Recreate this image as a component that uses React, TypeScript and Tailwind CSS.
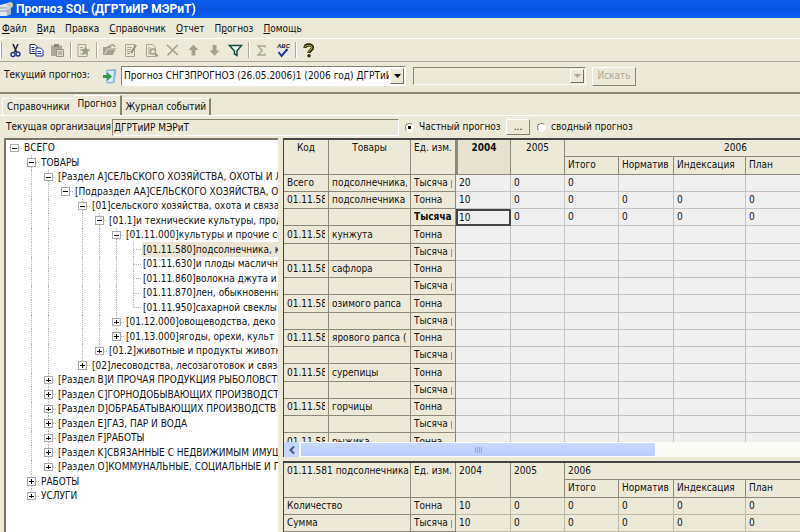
import type { ReactNode } from 'react';

type Node = { label: string; plus?: boolean; selected?: boolean; children?: Node[] };
type Row = { node: Node; guides: boolean[]; last: boolean };

const tree: Node = {
  label: 'ВСЕГО',
  children: [
    {
      label: 'ТОВАРЫ',
      children: [
        {
          label: '[Раздел A]СЕЛЬСКОГО ХОЗЯЙСТВА, ОХОТЫ И Л',
          children: [
            {
              label: '[Подраздел AA]СЕЛЬСКОГО ХОЗЯЙСТВА, ОХ',
              children: [
                {
                  label: '[01]сельского хозяйства, охота и связа',
                  children: [
                    {
                      label: '[01.1]и технические культуры, прод',
                      children: [
                        {
                          label: '[01.11.000]культуры и прочие се',
                          children: [
                            { label: '[01.11.580]подсолнечника, к', selected: true },
                            { label: '[01.11.630]и плоды масличны' },
                            { label: '[01.11.860]волокна джута и' },
                            { label: '[01.11.870]лен, обыкновенна' },
                            { label: '[01.11.950]сахарной свеклы' },
                          ],
                        },
                        { label: '[01.12.000]овощеводства, деко', plus: true },
                        { label: '[01.13.000]ягоды, орехи, культ', plus: true },
                      ],
                    },
                    { label: '[01.2]животные и продукты животн', plus: true },
                  ],
                },
                { label: '[02]лесоводства, лесозаготовок и связа', plus: true },
              ],
            },
          ],
        },
        { label: '[Раздел B]И ПРОЧАЯ ПРОДУКЦИЯ РЫБОЛОВСТВ', plus: true },
        { label: '[Раздел C]ГОРНОДОБЫВАЮЩИХ ПРОИЗВОДСТВ', plus: true },
        { label: '[Раздел D]ОБРАБАТЫВАЮЩИХ ПРОИЗВОДСТВ', plus: true },
        { label: '[Раздел E]ГАЗ, ПАР И ВОДА', plus: true },
        { label: '[Раздел F]РАБОТЫ', plus: true },
        { label: '[Раздел K]СВЯЗАННЫЕ С НЕДВИЖИМЫМ ИМУЩЕ', plus: true },
        { label: '[Раздел O]КОММУНАЛЬНЫЕ, СОЦИАЛЬНЫЕ И ПЕ', plus: true },
      ],
    },
    { label: 'РАБОТЫ', plus: true },
    { label: 'УСЛУГИ', plus: true },
  ],
};

function flatten(node: Node, guides: boolean[], last: boolean): Row[] {
  const kids = node.children ?? [];
  return [
    { node, guides, last },
    ...kids.flatMap((k, i) => flatten(k, [...guides, !last], i === kids.length - 1)),
  ];
}

const treeRows = flatten(tree, [], true);

function TreeRow({ node, guides, last }: Row) {
  const hasBox = node.plus || node.children;
  return (
    <li className="flex h-[14px] items-stretch whitespace-nowrap even:h-[15px]">
      {guides.map((on, i) => (
        <span key={i} className="flex w-[17px] shrink-0 justify-center">
          {on && <span className="w-px border-l border-dotted border-[#b5b5b5]" />}
        </span>
      ))}
      <svg className="h-full w-[17px] shrink-0" viewBox="0 0 17 15" fill="none" shapeRendering="crispEdges">
        {guides.length > 0 && (
          <path d={last ? 'M8.5 0V7' : 'M8.5 0V15'} stroke="#b5b5b5" strokeDasharray="1 1" />
        )}
        <path d="M9 7.5H17" stroke="#b5b5b5" strokeDasharray="1 1" />
        {hasBox && (
          <>
            <rect x="4.5" y="3.5" width="8" height="8" fill="#fff" stroke="#a5a5a5" />
            <path d={node.plus ? 'M6 7.5h5M8.5 5v5' : 'M6 7.5h5'} stroke="#000" />
          </>
        )}
      </svg>
      <span className={node.selected ? 'flex items-center bg-[#ece5d5] px-px' : 'flex items-center px-px'}>
        {node.label}
      </span>
    </li>
  );
}

const menus = [
  ['', 'Ф', 'айл'],
  ['', 'В', 'ид'],
  ['Правка', '', ''],
  ['', 'С', 'правочник'],
  ['', 'О', 'тчет'],
  ['П', 'р', 'огноз'],
  ['', 'П', 'омощь'],
];

function Tool({ label, children }: { label: string; children: ReactNode }) {
  return (
    <button aria-label={label} className="flex w-[21px] justify-center">
      <svg width="15" height="15" viewBox="0 0 15 15" fill="none">
        {children}
      </svg>
    </button>
  );
}

function Sep() {
  return <span className="mr-px ml-[2px] h-[16px] w-[2px] border-l border-[#aca899] bg-white" />;
}

function Toolbar() {
  return (
    <div className="flex h-[23px] shrink-0 items-center border-t border-white">
      <span className="mr-[3px] h-[16px] w-[2px] border-r border-[#aca899] bg-white" />
      <Tool label="Вырезать">
        <path d="M5 1l3.5 8M10 1L6.5 9" stroke="#20203c" strokeWidth="1.5" />
        <circle cx="5" cy="11.5" r="2" stroke="#23358c" strokeWidth="1.4" />
        <circle cx="10" cy="11" r="2" stroke="#23358c" strokeWidth="1.4" />
      </Tool>
      <Tool label="Копировать">
        <path d="M1 1.5h5l2 2v7H1z" fill="#fff" stroke="#1c2450" />
        <path d="M2.5 4.5h3M2.5 6.5h3M2.5 8.5h3" stroke="#1c2450" />
        <path d="M7 5h4.5l2.5 2.5V13H7z" fill="#fff" stroke="#1d3399" />
        <path d="M8.5 8.5h3.5M8.5 10.5h4" stroke="#1d3399" />
      </Tool>
      <Tool label="Вставить">
        <path d="M1 2.5h11V13H1z" fill="#aca899" />
        <path d="M4 1h5v3H4z" fill="#8c8878" />
        <path d="M6.5 6.5h7v7h-7z" fill="#dedac8" stroke="#999584" />
        <path d="M8 9h4M8 11h4" stroke="#999584" />
      </Tool>
      <Sep />
      <Tool label="Создать">
        <path d="M2 1.5h8v2M2 1.5V13.5h9V11" stroke="#a9a595" />
        <path d="M4 4.5h3M4 7h2M4 11h5" stroke="#a9a595" />
        <path d="M9.5 2.5l1.5 3.5 3.500.7-2.800 2 .3 3.800-3-2-3 1.500 1-3.500L4.500 6.500l3.500-.5z" fill="#a09c8c" />
      </Tool>
      <Sep />
      <Tool label="Открыть">
        <path d="M1 4h4l1-1.5h3V5h5l-3 7H1z" fill="#a5a191" />
        <path d="M8 4c1-3 4-3 5 0" stroke="#a5a191" strokeWidth="1.5" />
        <path d="M3 11l2-5h8" stroke="#dedac8" />
      </Tool>
      <Tool label="Изменить">
        <path d="M2.5 1.5h9v12h-9z" stroke="#a9a595" />
        <path d="M4 4.5h5M4 6.5h4M4 8.5h3M4 10.5h3" stroke="#a9a595" />
        <path d="M13 2L8 10" stroke="#96927f" strokeWidth="2" />
      </Tool>
      <Tool label="Просмотр">
        <path d="M2.5 1.5h6l3 3v9h-9z" stroke="#a9a595" />
        <path d="M4 5h3M4 7h2M4 9h2M4 11h3" stroke="#a9a595" />
        <circle cx="9" cy="8.5" r="2.5" stroke="#a09c8c" strokeWidth="1.3" />
        <path d="M11 10.5l3 3" stroke="#a09c8c" strokeWidth="1.8" />
      </Tool>
      <Tool label="Удалить">
        <path d="M2 2l11 10M12.5 2L2.5 12.5" stroke="#a19d8d" strokeWidth="1.5" />
      </Tool>
      <Tool label="Вверх">
        <path d="M7.5 1.5L12.500 7H9.500v5.500h-4V7h-3z" fill="#a5a191" />
      </Tool>
      <Tool label="Вниз">
        <path d="M7.5 13L2.500 7.500h3V2h4v5.500h3z" fill="#a5a191" />
      </Tool>
      <Tool label="Фильтр">
        <path d="M1.5 2.5h12L9 8v4.500L6.500 11V8z" fill="#e9f6ee" stroke="#154a42" strokeWidth="1.5" />
      </Tool>
      <Sep />
      <Tool label="Сумма">
        <path d="M11 4.5V3H4l4 4.500L4 12h7v-1.500" stroke="#a9a595" strokeWidth="1.3" />
      </Tool>
      <Tool label="Орфография">
        <text x="2" y="5" fontSize="6" fontWeight="bold" fontStyle="italic" fill="#222" fontFamily="Liberation Sans">ABC</text>
        <path d="M3.5 9l3 4 6-7" stroke="#23359c" strokeWidth="2" />
      </Tool>
      <Sep />
      <Tool label="Справка">
        <path d="M4 5c0-4 7.500-4 7.500-.5C11.500 7 8 7 8 10" stroke="#1c1c08" strokeWidth="3.2" />
        <path d="M4 4.500c0-3 7-3 7 0C11 7 7.700 6.500 7.700 9.500" stroke="#a8a02c" strokeWidth="1.2" />
        <circle cx="8" cy="12.8" r="1.7" fill="#2b2a0c" />
      </Tool>
    </div>
  );
}

function DropArrow({ dim }: { dim?: boolean }) {
  return (
    <span className="pointer-events-none absolute inset-y-[2px] right-[2px] flex w-[14px] items-center justify-center border border-t-white border-r-[#716f64] border-b-[#716f64] border-l-white bg-[#ece9d8]">
      <svg width="7" height="4" viewBox="0 0 7 4">
        <path d="M0 0h7L3.5 4z" fill={dim ? '#aca899' : '#000'} />
      </svg>
    </span>
  );
}

const sunken = 'border border-t-[#86836f] border-l-[#86836f] border-r-white border-b-white';

const goods: [string, string, string, string[]][] = [
  ['Всего', 'подсолнечника,', 'Тысяча р', ['20', '0', '0', '', '', '']],
  ['01.11.58', 'подсолнечника', 'Тонна', ['10', '0', '0', '0', '0', '0']],
  ['', '', 'Тысяча', ['10', '0', '0', '0', '0', '0']],
  ...['кунжута', 'сафлора', 'озимого рапса', 'ярового рапса (к', 'сурепицы', 'горчицы', 'рыжика'].flatMap(
    (name): [string, string, string, string[]][] => [
      ['01.11.58', name, 'Тонна', ['', '', '', '', '', '']],
      ['', '', 'Тысяча р', ['', '', '', '', '', '']],
    ],
  ),
];

const head = 'border-r border-b border-[#8d8a7c] bg-[#ece9d8] px-[3px] pt-px pb-0 align-top font-normal whitespace-nowrap';
const fixed = 'border-r border-b border-[#8d8a7c] bg-[#ece9d8] px-[3px] py-0';
const value = 'border-r border-b border-[#c3c3c3] bg-[#efefef] px-[3px] py-0';

function Clip({ children }: { children: ReactNode }) {
  return <div className="overflow-hidden whitespace-nowrap">{children}</div>;
}

function Cols() {
  return (
    <colgroup>
      <col className="w-[45px]" />
      <col className="w-[82px]" />
      <col className="w-[45px]" />
      <col className="w-[55px]" />
      <col className="w-[54px]" />
      <col className="w-[54px]" />
      <col className="w-[55px]" />
      <col className="w-[72px]" />
      <col />
    </colgroup>
  );
}

const tableClass = 'w-full min-w-[623px] table-fixed border-separate border-spacing-0 leading-[14px]';

function MainTable() {
  return (
    <table className={tableClass}>
      <Cols />
      <thead>
        <tr className="h-[17px]">
          <th rowSpan={2} className={head}>Код</th>
          <th rowSpan={2} className={head}>Товары</th>
          <th rowSpan={2} className={head}>Ед. изм.</th>
          <th rowSpan={2} className="border-r border-b border-l-2 border-[#8d8a7c] bg-[#e6e2cf] pt-px pb-0 align-top font-bold">2004</th>
          <th rowSpan={2} className={head}>2005</th>
          <th colSpan={4} className={head}>2006</th>
        </tr>
        <tr className="h-[18px] text-left">
          <th className={head}>Итого</th>
          <th className={head}>Норматив</th>
          <th className={head}>Индексация</th>
          <th className={head}>План</th>
        </tr>
      </thead>
      <tbody>
        {goods.map(([code, name, unit, values], r) => (
          <tr key={r} className="h-[17px] nth-[4n]:h-[18px]">
            <td className={fixed}><Clip>{code}</Clip></td>
            <td className={fixed}><Clip>{name}</Clip></td>
            <td className={fixed}><Clip>{r === 2 ? <b>{unit}</b> : unit}</Clip></td>
            {values.map((v, c) => (
              <td
                key={c}
                className={r === 2 && c === 0 ? 'border-2 border-[#444] bg-[#efefef] px-px py-0 leading-[13px]' : value}
              >
                {v}
              </td>
            ))}
          </tr>
        ))}
      </tbody>
    </table>
  );
}

function TotalsTable() {
  const beige = 'border-r border-b border-[#bab7a7] bg-[#ece9d8] px-[3px] py-0';
  return (
    <table className={tableClass}>
      <Cols />
      <thead className="text-left">
        <tr className="h-[17px]">
          <th rowSpan={2} colSpan={2} className={head}>01.11.581 подсолнечника</th>
          <th rowSpan={2} className={head}>Ед. изм.</th>
          <th rowSpan={2} className={head}>2004</th>
          <th rowSpan={2} className={head}>2005</th>
          <th colSpan={4} className={head}>2006</th>
        </tr>
        <tr className="h-[18px]">
          <th className={head}>Итого</th>
          <th className={head}>Норматив</th>
          <th className={head}>Индексация</th>
          <th className={head}>План</th>
        </tr>
      </thead>
      <tbody>
        {[
          ['Количество', 'Тонна'],
          ['Сумма', 'Тысяча р'],
        ].map(([name, unit]) => (
          <tr key={name} className="h-[17px]">
            <td colSpan={2} className={fixed}><Clip>{name}</Clip></td>
            <td className={fixed}><Clip>{unit}</Clip></td>
            {['10', '0', '0', '0', '0', '0'].map((v, c) => (
              <td key={c} className={beige}>{v}</td>
            ))}
          </tr>
        ))}
      </tbody>
    </table>
  );
}

export default function App() {
  return (
    <div className="flex h-screen flex-col overflow-hidden bg-[#ece9d8] font-['DejaVu_Sans_Condensed','DejaVu_Sans',sans-serif] text-[10px] leading-[14px] text-[#111]">
      <header className="flex h-[18px] shrink-0 items-center gap-[2px] bg-linear-to-b from-[#0a5cf0] via-[#0553e2] to-[#0a5cf5] text-[12px] font-bold text-white [font-family:Roboto,sans-serif]">
        <svg width="14" height="16" viewBox="0 0 14 16">
          <path d="M0 4l8-2 3 2v9l-5 2H0z" fill="#dfe6ee" />
          <path d="M0 7h7M0 10h7" stroke="#8797ab" />
          <circle cx="10" cy="4" r="3" fill="#cfc8ae" />
          <path d="M7 8l4-1v6l-4 2z" fill="#a8b6c8" />
        </svg>
        <h1>Прогноз SQL (ДГРТиИР МЭРиТ)</h1>
      </header>

      <nav className="flex h-[20px] shrink-0 items-center gap-[10px] pt-px pl-[2px]">
        {menus.map(([a, u, b]) => (
          <button key={a + u + b}>
            {a}
            <u>{u}</u>
            {b}
          </button>
        ))}
      </nav>

      <Toolbar />

      <section className="flex h-[33px] shrink-0 items-center border-t border-b-2 border-t-[#aca899] border-b-[#8a8776] pb-[2px] pl-[4px]">
        <label htmlFor="forecast" className="w-[98px] pb-[3px]">Текущий прогноз:</label>
        <svg className="mr-[4px]" width="15" height="15" viewBox="0 0 15 15">
          <path d="M4 1l9-1 1.500 1-2 13-7 .5L4 13z" fill="#8eb4dc" />
          <path d="M5 2h7l-1 11H5z" fill="#d7e8f8" />
          <path d="M1 6h4V3l5 4.500L5 12V9H1z" fill="#2f9a4a" />
        </svg>
        <div className="relative w-[285px]">
          <select id="forecast" className={`h-[20px] w-full appearance-none overflow-hidden bg-white pr-[16px] pl-[2px] ${sunken}`}>
            <option>Прогноз СНГЗПРОГНОЗ (26.05.2006)1 (2006 год) ДГРТиИР</option>
          </select>
          <DropArrow />
        </div>
        <div className="relative ml-[7px] w-[173px]">
          <select aria-label="Поиск" disabled className={`h-[18px] w-full appearance-none bg-[#ece9d8] ${sunken}`} />
          <DropArrow dim />
        </div>
        <button disabled className="ml-[6px] h-[19px] w-[44px] border border-t-white border-r-[#86836f] border-b-[#86836f] border-l-white text-[#aca899]">
          Искать
        </button>
      </section>

      <div role="tablist" className="flex h-[22px] shrink-0 items-end border-b border-white pl-[2px]">
        <button role="tab" className="h-[17px] border-t border-l border-white px-[4px]">Справочники</button>
        <button role="tab" aria-selected className="h-[20px] border-t border-r-2 border-t-white border-r-[#86836f] px-[4px] pb-[3px]">Прогноз</button>
        <button role="tab" className="h-[17px] border-t border-r-2 border-t-white border-r-[#86836f] px-[3px]">Журнал событий</button>
      </div>

      <section className="flex h-[22px] shrink-0 items-center pl-[6px]">
        <label htmlFor="org" className="w-[106px] whitespace-nowrap">Текущая организация</label>
        <input id="org" readOnly defaultValue="ДГРТиИР МЭРиТ" className={`h-[17px] w-[287px] bg-[#ece9d8] px-px ${sunken}`} />
        <label className="ml-[6px] flex w-[101px] items-center gap-[5px] whitespace-nowrap">
          <input type="radio" name="mode" defaultChecked className="size-[9px] appearance-none rounded-full border border-[#86836f] border-r-white border-b-white bg-white bg-radial from-black from-25% to-white to-40%" />
          Частный прогноз
        </label>
        <button className="h-[16px] w-[24px] border border-t-white border-r-[#86836f] border-b-[#86836f] border-l-white leading-[10px]">...</button>
        <label className="ml-[7px] flex items-center gap-[5px] whitespace-nowrap">
          <input type="radio" name="mode" className="size-[9px] appearance-none rounded-full border border-[#86836f] border-r-white border-b-white bg-white" />
          сводный прогноз
        </label>
      </section>

      <main className="flex min-h-0 flex-1 pl-[4px]">
        <ul className="w-[274px] shrink-0 overflow-hidden border-t-2 border-l-2 border-[#77756a] bg-white pt-px">
          {treeRows.map((row) => (
            <TreeRow key={row.node.label} {...row} />
          ))}
        </ul>
        <div className="ml-[5px] flex min-w-0 flex-1 flex-col">
          <div className="flex min-h-0 flex-1 flex-col border-t-2 border-l border-[#444]">
            <div className="min-h-0 flex-1 overflow-hidden">
              <MainTable />
            </div>
            <div className="flex h-[15px] shrink-0 bg-[#fbfbf6]">
              <button aria-label="Прокрутить влево" className="flex w-[15px] items-center justify-center rounded-xs bg-[#c6d5fd]">
                <svg width="6" height="8" viewBox="0 0 6 8" fill="none">
                  <path d="M5 0.5L1.5 4L5 7.5" stroke="#3c5a94" strokeWidth="2" />
                </svg>
              </button>
              <div className="ml-px flex w-[69%] items-center justify-center gap-px rounded-xs border border-white bg-linear-to-b from-[#cad9ff] to-[#b8cbfa]">
                {[0, 1, 2, 3].map((i) => (
                  <span key={i} className="h-[6px] w-px bg-[#8fa9e6]" />
                ))}
              </div>
            </div>
          </div>
          <div className="mt-[4px] shrink-0 overflow-hidden border-t-2 border-l border-[#444]">
            <TotalsTable />
          </div>
        </div>
      </main>
    </div>
  );
}
